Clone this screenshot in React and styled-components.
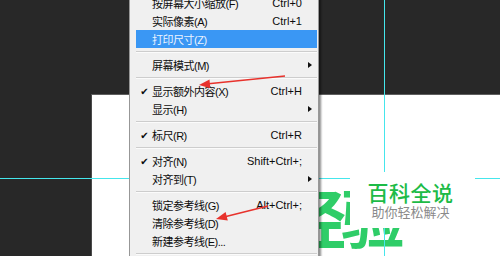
import React from 'react';
import styled, { createGlobalStyle } from 'styled-components';

const GlobalStyle = createGlobalStyle`
  html, body {
    margin: 0;
    padding: 0;
    background: #282828;
    overflow: hidden;
  }
`;

const Workspace = styled.div`
  position: relative;
  width: 500px;
  height: 256px;
  overflow: hidden;
  background: #282828;
  display: flex;
  padding: 94px 0 0 91px;
  box-sizing: border-box;
  font-family: "Liberation Sans", "Noto Sans CJK SC", sans-serif;
`;

const Canvas = styled.div`
  position: relative;
  flex: 1;
  background: #fff;
  border-top: 1px solid #5e5e5e;
  border-left: 1px solid #4a4a4a;
`;

// big artwork text on the document, mostly hidden by the menu
const ArtText = styled.div`
  position: absolute;
  left: 190px;
  top: 88px;
  font-family: "Noto Sans CJK SC", sans-serif;
  font-weight: 700;
  font-size: 64px;
  line-height: 1;
  letter-spacing: -5px;
  color: #2fcd68;
  white-space: nowrap;
`;

const Guide = styled.div`
  position: absolute;
  background: #45e6ec;
  ${(p) =>
    p.$vertical
      ? `left: ${p.$at}px; top: 0; width: 1px; height: 100%;`
      : `top: ${p.$at}px; left: 0; height: 1px; width: 100%;`}
`;

const Watermark = styled.div`
  position: absolute;
  left: 350px;
  top: 172px;
  width: 125px;
  height: 56px;
  background: #fff;
  display: flex;
  flex-direction: column;
  align-items: center;
  justify-content: center;
  font-family: "Noto Sans CJK SC", sans-serif;
`;

const WatermarkTitle = styled.div`
  font-size: 21px;
  font-weight: 500;
  color: #1dbb47;
  line-height: 24px;
  letter-spacing: 0.5px;
  margin-left: -4px;
`;

const WatermarkSub = styled.div`
  font-size: 13px;
  color: #8a8a8a;
  line-height: 16px;
  margin-left: -4px;
`;

const Menu = styled.div`
  position: absolute;
  left: 129px;
  top: -10px;
  width: 190px;
  padding: 3px 1px 3px 6px;
  box-sizing: border-box;
  background: #f0f0f0;
  border: 1px solid #979797;
  box-shadow: 2px 2px 2px rgba(0, 0, 0, 0.45);
`;

const Item = styled.div`
  display: grid;
  grid-template-columns: 16px 1fr auto 15px;
  align-items: center;
  height: 18px;
  font-size: 11px;
  color: ${(p) => (p.$active ? '#eaf3ff' : '#0c0c0c')};
  background: ${(p) => (p.$active ? '#3a97f4' : 'transparent')};
`;

const Check = styled.span`
  font-family: "DejaVu Sans", sans-serif;
  font-size: 10px;
  text-align: center;
  padding-left: 1px;
`;

const Label = styled.span`
  letter-spacing: -0.5px;
  white-space: nowrap;
`;

const Shortcut = styled.span`
  white-space: nowrap;
  text-align: right;
`;

const SubArrow = styled.span`
  justify-self: center;
  width: 0;
  height: 0;
  border-top: 3.5px solid transparent;
  border-bottom: 3.5px solid transparent;
  border-left: 4px solid #111;
  margin-left: 1px;
`;

const Separator = styled.div`
  height: 8px;
  display: flex;
  align-items: center;
  &::after {
    content: '';
    flex: 1;
    border-top: 1px solid #cdcdcd;
    border-bottom: 1px solid #fbfbfb;
  }
`;

const Overlay = styled.svg`
  position: absolute;
  left: 0;
  top: 0;
  width: 500px;
  height: 256px;
  pointer-events: none;
`;

const menuRows = [
  { label: '按屏幕大小缩放(F)', key: 'Ctrl+0' },
  { label: '实际像素(A)', key: 'Ctrl+1' },
  { label: '打印尺寸(Z)', active: true },
  'sep',
  { label: '屏幕模式(M)', sub: true },
  'sep',
  { label: '显示额外内容(X)', key: 'Ctrl+H', checked: true },
  { label: '显示(H)', sub: true },
  'sep',
  { label: '标尺(R)', key: 'Ctrl+R', checked: true },
  'sep',
  { label: '对齐(N)', key: 'Shift+Ctrl+;', checked: true },
  { label: '对齐到(T)', sub: true },
  'sep',
  { label: '锁定参考线(G)', key: 'Alt+Ctrl+;' },
  { label: '清除参考线(D)' },
  { label: '新建参考线(E)...' },
  'sep',
];

const Arrow = ({ x1, y1, x2, y2, head }) => (
  <g>
    <line x1={x1} y1={y1} x2={x2} y2={y2} stroke="#e8322c" strokeWidth="1.4" />
    <polygon points={head} fill="#e8322c" />
  </g>
);

const App = () => {
  return (
    <>
      <GlobalStyle />
      <Workspace>
        <Canvas>
          <ArtText>经验</ArtText>
        </Canvas>
        <Guide $at={178} />
        <Guide $vertical $at={384} />
        <Watermark>
          <WatermarkTitle>百科全说</WatermarkTitle>
          <WatermarkSub>助你轻松解决</WatermarkSub>
        </Watermark>
        <Menu>
          {menuRows.map((row, i) =>
            row === 'sep' ? (
              <Separator key={i} />
            ) : (
              <Item key={i} $active={row.active}>
                <Check>{row.checked ? '✔' : ''}</Check>
                <Label>{row.label}</Label>
                <Shortcut>{row.key || ''}</Shortcut>
                {row.sub ? <SubArrow /> : <span />}
              </Item>
            )
          )}
        </Menu>
        <Overlay viewBox="0 0 500 256">
          <Arrow x1={285} y1={76} x2={206} y2={84} head="199,85 210.3,88.3 209.5,79.6" />
          <Arrow x1={268} y1={206} x2={222} y2={217.5} head="216,219 227.8,220.4 225.6,212" />
        </Overlay>
      </Workspace>
    </>
  );
};

export default App;
